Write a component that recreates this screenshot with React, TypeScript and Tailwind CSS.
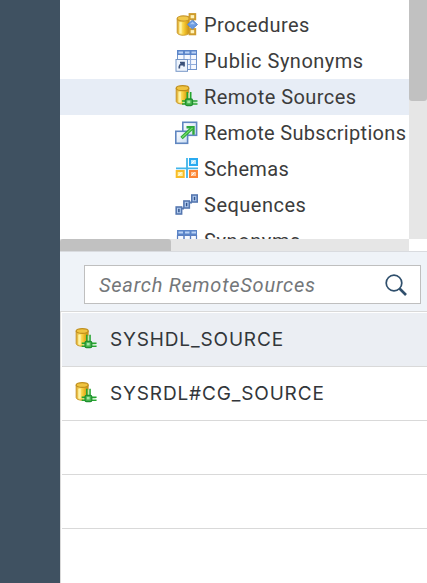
import React from "react";

const Cylinder = () => (
  <>
    <path d="M1.500 4v15c0 1.700 3 3 6.500 3s6.500-1.300 6.500-3V4z" fill="url(#gold)" stroke="#c99a2c" strokeWidth="1" />
    <ellipse cx="8" cy="4" rx="6.500" ry="2.800" fill="#f2c94a" stroke="#c9982a" strokeWidth="1.200" />
    <path d="M5 8v12" stroke="#fff6b0" strokeWidth="2.500" opacity=".85" />
  </>
);

const Defs = () => (
  <svg width="0" height="0" className="absolute" aria-hidden="true">
    <defs>
      <linearGradient id="gold">
        <stop offset="0" stopColor="#dca52a" />
        <stop offset=".3" stopColor="#ffe978" />
        <stop offset=".6" stopColor="#f3c52f" />
        <stop offset="1" stopColor="#c48a10" />
      </linearGradient>
      <linearGradient id="sheet" x2="1" y2="1">
        <stop offset="0" stopColor="#ffffff" />
        <stop offset="1" stopColor="#c9dcf3" />
      </linearGradient>
    </defs>
  </svg>
);

const box = "block h-6 w-6 shrink-0";

const ProceduresIcon = () => (
  <svg viewBox="0 0 24 24" className={box}>
    <g transform="translate(.3 -.7)">
      <path d="M13 4.500h4M13 18.500h4M18 7v10" stroke="#c9a040" strokeWidth="1.500" />
      <g transform="translate(.5 2.500) scale(.93)"><Cylinder /></g>
      <rect x="14.300" y="1.800" width="5.600" height="5.200" fill="#fff3b8" stroke="#cf9c2c" strokeWidth="2" />
      <rect x="14.300" y="16.800" width="5.600" height="5.200" fill="#fff3b8" stroke="#cf9c2c" strokeWidth="2" />
      <path d="M17.200 7.800l5 4.400-5 4.400-5-4.400z" fill="#6b9be0" stroke="#5c89cf" />
      <path d="M17.200 9.500l2.600 2.400h-5.200z" fill="#a9c8f4" />
    </g>
  </svg>
);

const Table = () => (
  <>
    <rect x="2.500" y="1.500" width="19" height="19" fill="#f6f9fe" stroke="#7194cb" />
    <rect x="2" y="1" width="20" height="5" fill="#5b85c9" />
    <path d="M3.500 3.500h4.500M10 3.500h4.500M16.500 3.500h4.500" stroke="#b9d2f6" strokeWidth="2" />
    <path d="M3 10.500h18M3 15.500h18M9 6v14M15.500 6v14" stroke="#92addb" strokeWidth="1.200" />
  </>
);

const PublicSynonymsIcon = () => (
  <svg viewBox="0 0 24 24" className={box}>
    <Table />
    <rect x="1" y="10.500" width="11.500" height="11.800" fill="#eef4fc" stroke="#7797c7" />
    <path d="M4.300 19.500c-.3-3 .8-4.500 3.300-5M5 13.500H9v4M8.800 13.700L6.500 16.500" fill="none" stroke="#3a5078" strokeWidth="1.700" />
  </svg>
);

const SynonymsIcon = () => (
  <svg viewBox="0 0 24 24" className={box}>
    <Table />
    <path d="M2 6.500h20M2 10.500h20M2.500 6v14M9 6v14M15.500 6v14M21.500 6v14" stroke="#5b7fc0" strokeWidth="1.200" />
  </svg>
);

const RemoteSourceIcon = ({ className = box }: { className?: string }) => (
  <svg viewBox="0 0 24 24" className={className}>
    <g transform="translate(-.3 -.8)">
      <path d="M1.500 4v13c0 1.700 3 2.800 6 2.800s6.500-1.100 6.500-2.800V4z" fill="url(#gold)" stroke="#c99a2c" />
      <ellipse cx="7.800" cy="4" rx="6.300" ry="2.500" fill="#f0c440" stroke="#c08f1c" strokeWidth="1.300" />
      <path d="M5 8v10" stroke="#fff6b0" strokeWidth="2.500" opacity=".85" />
    </g>
    <path d="M12.300 7v8M15.700 7v8M7 16h15.500M7 19h15.500" stroke="#25a52f" strokeWidth="1.600" />
    <path d="M14 8v7M8 17.500h13.500" stroke="#b9edb2" strokeWidth="1.200" />
    <rect x="10.500" y="14" width="7" height="6.500" rx="1.500" fill="#45b34d" stroke="#1f9030" strokeWidth="1.300" />
    <rect x="12.300" y="15.500" width="3" height="2.700" fill="#a5e6a5" />
  </svg>
);

const RemoteSubscriptionsIcon = () => (
  <svg viewBox="0 0 24 24" className={box}>
    <rect x="7.800" y="1.300" width="13.800" height="13" fill="url(#sheet)" stroke="#5f86c0" strokeWidth="1.600" />
    <rect x=".8" y="10.300" width="11.800" height="12" fill="url(#sheet)" stroke="#5f86c0" strokeWidth="1.600" />
    <path d="M6.500 17L17 7.300" stroke="#2ea83a" strokeWidth="3.400" />
    <path d="M11.500 6.300h7v7.500" fill="none" stroke="#2ea83a" strokeWidth="2.400" />
    <path d="M7 16.500L17.500 6.800" stroke="#7be06c" strokeWidth="1.100" />
  </svg>
);

const SchemasIcon = () => (
  <svg viewBox="0 0 24 24" className={box}>
    <path d="M12 1v20M1 11.300h22" stroke="#41b5ea" strokeWidth="1.800" />
    <rect x="15" y="2" width="7" height="6" fill="#bce9fc" stroke="#2aaaf0" strokeWidth="2" />
    <rect x="1.700" y="14" width="7" height="6" fill="#fff1a5" stroke="#f8bd28" strokeWidth="2" />
    <rect x="15" y="14" width="7" height="6" fill="#ffc69b" stroke="#fb8434" strokeWidth="2" />
    <path d="M16.500 6.500l3-3M3.300 18.500l3-3M16.500 18.500l3-3" stroke="#fff" strokeWidth="1" />
  </svg>
);

const SequencesIcon = () => (
  <svg viewBox="0 0 24 24" className={box}>
    <path d="M6 15.500h3M14 9.500h3" stroke="#5577b0" strokeWidth="2" />
    {[[1.200, 14], [8.900, 8], [16.800, 2]].map(([x, y]) => (
      <g key={x}>
        <rect x={x} y={y} width="5.400" height="7" fill="#b3cdf1" stroke="#5577b0" strokeWidth="1.600" />
        <path d={`M${x + 2.7} ${y + 1.8}v3.500`} stroke="#31528a" strokeWidth="1.500" />
      </g>
    ))}
  </svg>
);

const tree = [
  { label: "Procedures", Icon: ProceduresIcon, track: "tracking-[0.420px]" },
  { label: "Public Synonyms", Icon: PublicSynonymsIcon, track: "tracking-[0.500px]" },
  { label: "Remote Sources", Icon: RemoteSourceIcon, track: "tracking-[0.450px]", selected: true },
  { label: "Remote Subscriptions", Icon: RemoteSubscriptionsIcon, track: "tracking-[0.320px]" },
  { label: "Schemas", Icon: SchemasIcon, track: "tracking-[0.350px]" },
  { label: "Sequences", Icon: SequencesIcon, track: "tracking-[0.500px]" },
  { label: "Synonyms", Icon: SynonymsIcon, track: "tracking-[0.600px]" },
];

const sources = [
  { name: "SYSHDL_SOURCE", track: "tracking-[0.850px]" },
  { name: "SYSRDL#CG_SOURCE", track: "tracking-[0.850px]" },
];

export default function App() {
  return (
    <div className="flex h-[583px] w-[427px] overflow-hidden bg-white font-['Roboto','Liberation_Sans',sans-serif] text-[#32363a]">
      <Defs />
      <aside className="w-[60px] shrink-0 bg-[#3f5161]" />
      <main className="flex min-w-0 flex-1 flex-col">
        <section className="flex h-[239px] shrink-0">
          <ul className="w-[349px] shrink-0 overflow-hidden pt-[7px] text-[#3c3c3c]">
            {tree.map(({ label, Icon, track, selected }) => (
              <li key={label} className={`flex h-9 items-center gap-[5px] pl-[115px] ${selected ? "bg-[#e7edf6]" : ""}`}>
                <Icon />
                <span className={`whitespace-nowrap text-[20px] leading-9 ${track}`}>{label}</span>
              </li>
            ))}
          </ul>
          <div className="flex-1 bg-[#e6e6e6]">
            <div className="h-[101px] rounded-b-[3px] bg-[#c1c1c1]" />
          </div>
        </section>
        <div className="h-3 w-[349px] shrink-0 bg-[#e6e6e6]">
          <div className="h-3 w-[111px] rounded-t-[3px] bg-[#c1c1c1]" />
        </div>
        <section className="h-[60px] shrink-0 border-t border-[#d9dbdf] bg-[#eff3f8] pl-6 pt-[13px]">
          <div className="flex h-[39px] w-[337px] items-center justify-between border border-[#bfbfbf] bg-white pl-[14px] pr-[12px]">
            <span className="text-[20px] italic tracking-[0.760px] text-[#74777a]">Search RemoteSources</span>
            <svg viewBox="0 0 24 24" className="h-6 w-6" fill="none" stroke="#2f4f6c">
              <circle cx="10" cy="10" r="7.800" strokeWidth="1.700" />
              <path d="M15.500 15.500l6.500 6.500" strokeWidth="2.700" />
            </svg>
          </div>
        </section>
        <section className="flex-1 border-l border-t border-[#d9d9d9] pl-px pt-px">
          {sources.map(({ name, track }, i) => (
            <div key={name} className={`flex h-[54px] items-center gap-3 border-b border-[#d9d9d9] pb-px pl-[13px] ${i === 0 ? "bg-[#ebeef3]" : ""}`}>
              <RemoteSourceIcon className="block h-[23px] w-[23px] shrink-0" />
              <span className={`whitespace-nowrap pt-[2px] font-['Inter','Roboto',sans-serif] text-[19px] ${track}`}>{name}</span>
            </div>
          ))}
          <div className="h-[54px] border-b border-[#d9d9d9]" />
          <div className="h-[54px] border-b border-[#d9d9d9]" />
        </section>
      </main>
    </div>
  );
}
